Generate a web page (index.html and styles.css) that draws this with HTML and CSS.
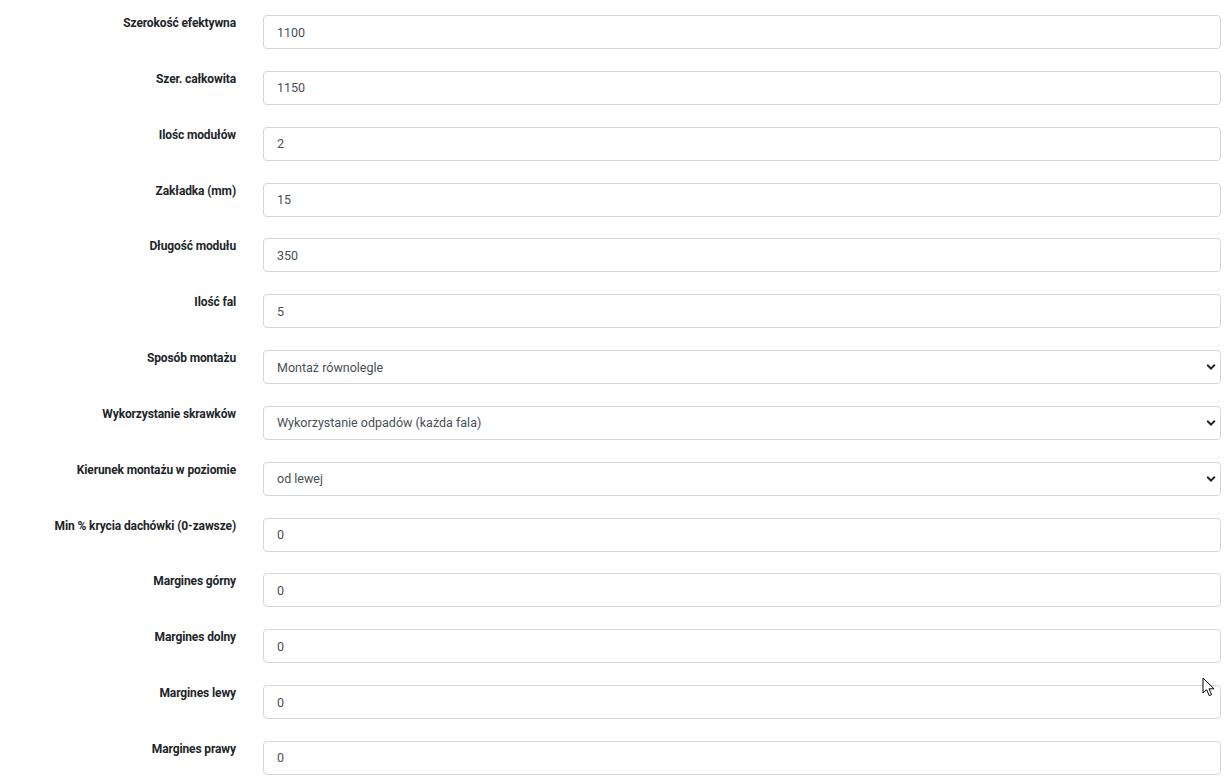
FILE: index.html
```html
<!DOCTYPE html>
<html lang="pl">
<head>
<meta charset="utf-8">
<link rel="stylesheet" href="styles.css">
</head>
<body>
<form class="form">
  <div class="row"><label class="lbl">Szerokość efektywna</label><div class="field">1100</div></div>
  <div class="row"><label class="lbl">Szer. całkowita</label><div class="field">1150</div></div>
  <div class="row"><label class="lbl">Ilośc modułów</label><div class="field">2</div></div>
  <div class="row"><label class="lbl">Zakładka (mm)</label><div class="field">15</div></div>
  <div class="row"><label class="lbl">Długość modułu</label><div class="field">350</div></div>
  <div class="row"><label class="lbl">Ilość fal</label><div class="field">5</div></div>
  <div class="row"><label class="lbl">Sposób montażu</label><div class="field select">Montaż równolegle<svg class="chev" viewBox="0 0 10 8" width="10" height="8"><path d="M1.2 1.8 L5 5.6 L8.8 1.8" fill="none" stroke="#222" stroke-width="2"/></svg></div></div>
  <div class="row"><label class="lbl">Wykorzystanie skrawków</label><div class="field select">Wykorzystanie odpadów (każda fala)<svg class="chev" viewBox="0 0 10 8" width="10" height="8"><path d="M1.2 1.8 L5 5.6 L8.8 1.8" fill="none" stroke="#222" stroke-width="2"/></svg></div></div>
  <div class="row"><label class="lbl">Kierunek montażu w poziomie</label><div class="field select">od lewej<svg class="chev" viewBox="0 0 10 8" width="10" height="8"><path d="M1.2 1.8 L5 5.6 L8.8 1.8" fill="none" stroke="#222" stroke-width="2"/></svg></div></div>
  <div class="row"><label class="lbl">Min % krycia dachówki (0-zawsze)</label><div class="field">0</div></div>
  <div class="row"><label class="lbl">Margines górny</label><div class="field">0</div></div>
  <div class="row"><label class="lbl">Margines dolny</label><div class="field">0</div></div>
  <div class="row"><label class="lbl">Margines lewy</label><div class="field">0</div></div>
  <div class="row"><label class="lbl">Margines prawy</label><div class="field">0</div></div>
</form>
<svg class="cursor" viewBox="0 0 13 20" width="13" height="20"><path d="M1 1 L1 16 L4.6 12.6 L7.2 18.6 L9.6 17.6 L7 11.8 L12 11.8 Z" fill="#fff" stroke="#000" stroke-width="1" stroke-linejoin="round"/></svg>
</body>
</html>
```
FILE: styles.css
```css
html, body {
  margin: 0;
  padding: 0;
  background: #fff;
}
body {
  font-family: Roboto, "Liberation Sans", Arial, sans-serif;
  position: relative;
  width: 1229px;
  height: 784px;
  overflow: hidden;
}
.form {
  display: flex;
  flex-direction: column;
  padding: 15px 8px 0 0;
}
.row {
  display: grid;
  grid-template-columns: 236px 1fr;
  column-gap: 27px;
  height: 55.85px;
}
.lbl {
  text-align: right;
  font-size: 12px;
  font-weight: 700;
  color: #212529;
  line-height: 14px;
  padding-top: 1px;
  letter-spacing: -0.12px;
}
.field {
  box-sizing: border-box;
  height: 34px;
  border: 1px solid #d4d6d9;
  border-radius: 4px;
  padding: 0 13px;
  display: flex;
  align-items: center;
  font-size: 12.5px;
  color: #495057;
  background: #fff;
}
.select {
  justify-content: space-between;
  padding-right: 4px;
}
.chev {
  display: block;
}
.cursor {
  position: absolute;
  left: 1202px;
  top: 677px;
}
```
